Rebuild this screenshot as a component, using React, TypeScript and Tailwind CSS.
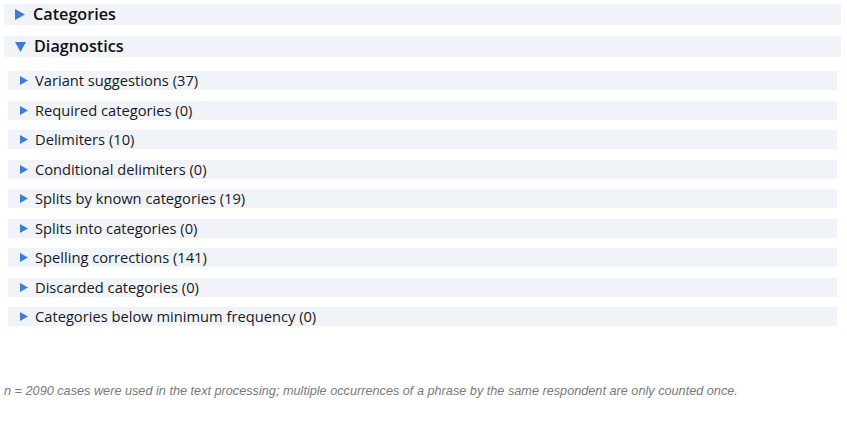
import React from "react";

const rows = [
  "Variant suggestions (37)",
  "Required categories (0)",
  "Delimiters (10)",
  "Conditional delimiters (0)",
  "Splits by known categories (19)",
  "Splits into categories (0)",
  "Spelling corrections (141)",
  "Discarded categories (0)",
  "Categories below minimum frequency (0)",
];

function Right({ size = 10 }: { size?: number }) {
  return (
    <svg width={size} height={size + 1} viewBox="0 0 10 11" className="shrink-0">
      <polygon points="0,0 10,5.5 0,11" fill="#3b7dd8" />
    </svg>
  );
}

function Down() {
  return (
    <svg width={11} height={10} viewBox="0 0 11 10" className="shrink-0">
      <polygon points="0,0 11,0 5.5,10" fill="#3b7dd8" />
    </svg>
  );
}

export default function App() {
  return (
    <div className="w-[847px] h-[429px] bg-white pt-[4px]" style={{ fontFamily: "'Open Sans', 'Noto Sans', sans-serif" }}>
      <div className="mx-[4px] mr-[6px] h-[21px] bg-[#f0f3f8] flex items-center pl-[11px]">
        <Right />
        <span className="ml-[8px] text-[16.2px] font-semibold text-[#111] leading-none">Categories</span>
      </div>
      <div className="mx-[4px] mr-[6px] mt-[11px] h-[21px] bg-[#f0f3f8] flex items-center pl-[11px]">
        <Down />
        <span className="ml-[8px] text-[16.2px] font-semibold text-[#111] leading-none">Diagnostics</span>
      </div>
      <div className="ml-[8px] mr-[10px] mt-[14px] flex flex-col gap-[10.5px]">
        {rows.map((r) => (
          <div key={r} className="h-[19px] bg-[#f0f3f8] flex items-center pl-[12px]">
            <Right size={8} />
            <span className="ml-[7px] text-[14.7px] text-[#1a1a1a] leading-none">{r}</span>
          </div>
        ))}
      </div>
      <div
        className="ml-[4px] mt-[58px] text-[12.7px] italic text-[#7a7a7a] leading-[14px]"
        style={{ fontFamily: "'Liberation Sans', Arial, sans-serif" }}
      >
        n = 2090 cases were used in the text processing; multiple occurrences of a phrase by the same respondent are only counted once.
      </div>
    </div>
  );
}
